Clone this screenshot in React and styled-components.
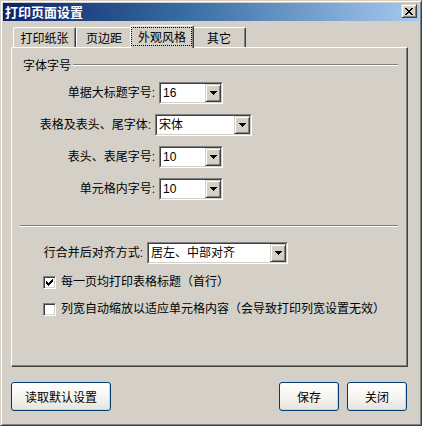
import React from 'react';
import styled, { createGlobalStyle } from 'styled-components';

const FONT = `"Liberation Sans", "Noto Sans CJK SC", sans-serif`;

const Global = createGlobalStyle`
  html, body { margin: 0; padding: 0; background: #D4D0C8; }
  body { font-family: ${FONT}; font-size: 12px; }
`;

const Window = styled.div`
  width: 422px;
  height: 426px;
  box-sizing: border-box;
  background: #D4D0C8;
  border: 1px solid;
  border-color: #D4D0C8 #404040 #404040 #D4D0C8;
  box-shadow: inset 1px 1px #fff, inset -1px -1px #808080;
  padding: 2px;
  display: flex;
  flex-direction: column;
  font-family: ${FONT};
  font-size: 12px;
  color: #000;
`;

const TitleBar = styled.div`
  height: 18px;
  flex: none;
  display: flex;
  align-items: flex-start;
  justify-content: space-between;
  padding: 0 2px 0 2px;
  background: linear-gradient(90deg, #0A246A 0%, #3A6EA5 45%, #A6CAF0 100%);
`;

const TitleText = styled.span`
  color: #fff;
  font-family: "Noto Sans CJK SC", sans-serif;
  font-weight: bold;
  font-size: 13px;
  line-height: 18px;
`;

const CloseBtn = styled.div`
  width: 16px;
  height: 14px;
  margin-top: 1px;
  box-sizing: border-box;
  background: #D4D0C8;
  border: 1px solid;
  border-color: #D4D0C8 #404040 #404040 #D4D0C8;
  box-shadow: inset 1px 1px #fff, inset -1px -1px #808080;
  display: flex;
  align-items: center;
  justify-content: center;
`;

const Content = styled.div`
  display: flex;
  flex-direction: column;
  padding: 4px 11px 0 8px;
`;

const TabStrip = styled.div`
  height: 22px;
  display: flex;
  align-items: flex-end;
  padding-left: 2px;
  position: relative;
  z-index: 1;
`;

const Tab = styled.div`
  position: relative;
  width: ${p => p.$w}px;
  height: ${p => (p.$active ? 23 : 20)}px;
  margin: 0 ${p => (p.$active ? -2 : 0)}px ${p => (p.$active ? -1 : 0)}px;
  z-index: ${p => (p.$active ? 2 : 1)};
  box-sizing: border-box;
  background: #D4D0C8;
  border-top: 1px solid #fff;
  border-left: 1px solid #fff;
  border-right: 1px solid #404040;
  box-shadow: inset -1px 0 #808080;
  border-top-left-radius: 2px;
  border-top-right-radius: 2px;
  display: flex;
  justify-content: center;
  padding-top: ${p => (p.$active ? 3 : 2)}px;
  font-family: "Noto Sans CJK SC", sans-serif;
  font-size: 12px;
  line-height: 16px;
`;

const FocusRect = styled.span`
  position: absolute;
  top: 1px;
  left: 0;
  right: 1px;
  bottom: 2px;
  border: 1px dotted #000;
`;

const Panel = styled.div`
  height: 320px;
  box-sizing: border-box;
  border: 1px solid;
  border-color: #fff #404040 #404040 #fff;
  box-shadow: inset -1px -1px #808080;
  padding: 10px 9px 0 8px;
  display: flex;
  flex-direction: column;
`;

const GroupHeader = styled.div`
  height: 14px;
  display: flex;
  align-items: center;
  padding-left: 3px;
  gap: 2px;
  font-family: "Noto Sans CJK SC", sans-serif;
  line-height: 14px;
`;

const Rule = styled.div`
  flex: 1;
  height: 0;
  border-top: 1px solid #808080;
  border-bottom: 1px solid #fff;
  margin-top: ${p => p.$mt || 0}px;
`;

const FieldRow = styled.div`
  display: flex;
  align-items: center;
  height: 22px;
  margin-top: ${p => p.$mt}px;
`;

const FieldLabel = styled.span`
  width: ${p => p.$w}px;
  box-sizing: border-box;
  padding-right: 4px;
  text-align: right;
  white-space: nowrap;
  line-height: 22px;
`;

const SelectBox = styled.div`
  width: ${p => p.$w}px;
  height: 22px;
  box-sizing: border-box;
  border: 1px solid;
  border-color: #808080 #fff #fff #808080;
  display: flex;
`;

const SelectInner = styled.div`
  flex: 1;
  display: flex;
  align-items: center;
  border: 1px solid;
  border-color: #404040 #D4D0C8 #D4D0C8 #404040;
  background: #fff;
`;

const SelectText = styled.span`
  flex: 1;
  padding-left: 2px;
  line-height: 18px;
  white-space: nowrap;
`;

const DropBtn = styled.div`
  width: 16px;
  height: 18px;
  box-sizing: border-box;
  background: #D4D0C8;
  border: 1px solid;
  border-color: #D4D0C8 #404040 #404040 #D4D0C8;
  box-shadow: inset 1px 1px #fff, inset -1px -1px #808080;
  display: flex;
  align-items: center;
  justify-content: center;
`;

const CheckRow = styled.label`
  display: flex;
  align-items: center;
  height: 13px;
  margin-top: ${p => p.$mt}px;
  padding-left: 23px;
  gap: 5px;
  white-space: nowrap;
  line-height: 13px;
`;

const CheckBox = styled.span`
  width: 13px;
  height: 13px;
  flex: none;
  box-sizing: border-box;
  border: 1px solid;
  border-color: #808080 #fff #fff #808080;
  box-shadow: inset 1px 1px #404040, inset -1px -1px #D4D0C8;
  background: #fff;
  display: flex;
  align-items: center;
  justify-content: center;
`;

const ButtonBar = styled.div`
  display: flex;
  justify-content: space-between;
  margin-top: 15px;
  padding-right: 1px;
`;

const ButtonGroup = styled.div`
  display: flex;
  gap: 8px;
`;

const Button = styled.button`
  width: ${p => p.$w}px;
  height: 29px;
  box-sizing: border-box;
  border: 1px solid #003C74;
  border-radius: 3px;
  background: linear-gradient(180deg, #FFFFFF 0%, #F5F4F0 55%, #E6E3DA 100%);
  box-shadow: inset -1px -1px #D8D2C6;
  font-family: "Noto Sans CJK SC", sans-serif;
  font-size: 12px;
  color: #000;
  padding: 0;
  cursor: default;
`;

const Arrow = () => (
  <svg width="7" height="4" viewBox="0 0 7 4" shapeRendering="crispEdges">
    <path d="M0 0h7v1H0z M1 1h5v1H1z M2 2h3v1H2z M3 3h1v1H3z" fill="#000" />
  </svg>
);

const CheckMark = () => (
  <svg width="7" height="7" viewBox="0 0 7 7" shapeRendering="crispEdges">
    <path
      d="M6 0h1v1H6z M5 1h2v1H5z M0 2h1v1H0z M4 2h3v1H4z M0 3h2v1H0z M3 3h3v1H3z M0 4h5v1H0z M1 5h3v1H1z M2 6h1v1H2z"
      fill="#000"
    />
  </svg>
);

const CloseX = () => (
  <svg width="8" height="7" viewBox="0 0 8 7" shapeRendering="crispEdges">
    <path
      d="M0 0h2v1H0z M6 0h2v1H6z M1 1h2v1H1z M5 1h2v1H5z M2 2h4v1H2z M3 3h2v1H3z M2 4h4v1H2z M1 5h2v1H1z M5 5h2v1H5z M0 6h2v1H0z M6 6h2v1H6z"
      fill="#000"
    />
  </svg>
);

const Select = ({ w, value }) => (
  <SelectBox $w={w}>
    <SelectInner>
      <SelectText>{value}</SelectText>
      <DropBtn>
        <Arrow />
      </DropBtn>
    </SelectInner>
  </SelectBox>
);

const Field = ({ label, labelW, selectW, value, mt }) => (
  <FieldRow $mt={mt}>
    <FieldLabel $w={labelW}>{label}</FieldLabel>
    <Select w={selectW} value={value} />
  </FieldRow>
);

const tabs = [
  { label: '打印纸张', w: 63 },
  { label: '页边距', w: 56 },
  { label: '外观风格', w: 64, active: true },
  { label: '其它', w: 54 },
];

export default function App() {
  return (
    <>
      <Global />
      <Window>
        <TitleBar>
          <TitleText>打印页面设置</TitleText>
          <CloseBtn>
            <CloseX />
          </CloseBtn>
        </TitleBar>
        <Content>
          <TabStrip>
            {tabs.map(t => (
              <Tab key={t.label} $w={t.w} $active={t.active}>
                {t.active && <FocusRect />}
                {t.label}
              </Tab>
            ))}
          </TabStrip>
          <Panel>
            <GroupHeader>
              <span>字体字号</span>
              <Rule />
            </GroupHeader>
            <Field mt={10} label="单据大标题字号:" labelW={139} selectW={64} value="16" />
            <Field mt={10} label="表格及表头、尾字体:" labelW={135} selectW={97} value="宋体" />
            <Field mt={10} label="表头、表尾字号:" labelW={139} selectW={64} value="10" />
            <Field mt={10} label="单元格内字号:" labelW={139} selectW={64} value="10" />
            <Rule $mt={25} style={{ flex: 'none' }} />
            <Field mt={15} label="行合并后对齐方式:" labelW={127} selectW={141} value="居左、中部对齐" />
            <CheckRow $mt={12}>
              <CheckBox>
                <CheckMark />
              </CheckBox>
              每一页均打印表格标题（首行）
            </CheckRow>
            <CheckRow $mt={14}>
              <CheckBox />
              列宽自动缩放以适应单元格内容（会导致打印列宽设置无效）
            </CheckRow>
          </Panel>
          <ButtonBar>
            <Button $w={100}>读取默认设置</Button>
            <ButtonGroup>
              <Button $w={60}>保存</Button>
              <Button $w={60}>关闭</Button>
            </ButtonGroup>
          </ButtonBar>
        </Content>
      </Window>
    </>
  );
}
